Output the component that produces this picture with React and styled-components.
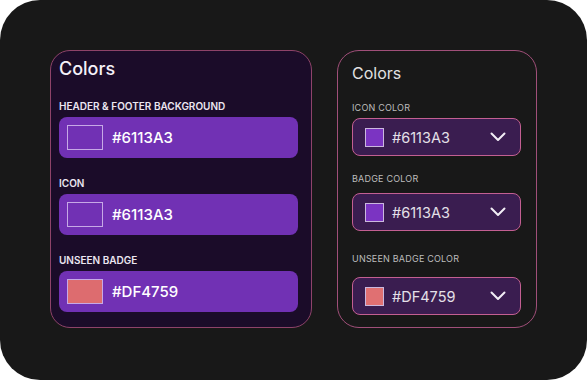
import React from "react";
import styled, { createGlobalStyle } from "styled-components";

const Global = createGlobalStyle`
  html, body { margin: 0; padding: 0; background: #ffffff; }
  * { box-sizing: border-box; }
  body { font-family: Inter, "Noto Sans", sans-serif; -webkit-font-smoothing: antialiased; }
`;

const Frame = styled.div`
  width: 587px;
  height: 380px;
  border-radius: 40px;
  background: #181818;
  display: flex;
  align-items: flex-start;
  gap: 25px;
  padding: 50px 0 0 50px;
`;

const EditorPanel = styled.section`
  width: 262px;
  border: 1px solid #8e4369;
  border-radius: 20px;
  background: #1b0c29;
  padding: 7px 13px 15px 8px;
  display: flex;
  flex-direction: column;
`;

const PreviewPanel = styled.section`
  width: 200px;
  border: 1px solid #a04f79;
  border-radius: 22px;
  background: #181818;
  padding: 12px 15px 12px 14px;
  display: flex;
  flex-direction: column;
`;

const EditorTitle = styled.h2`
  margin: 0;
  font-size: 18px;
  line-height: 22px;
  font-weight: 500;
  color: #f5f1f8;
`;

const PreviewTitle = styled.h2`
  margin: 0;
  font-size: 16px;
  line-height: 20px;
  font-weight: 400;
  color: #e2e2e2;
`;

const Field = styled.div`
  display: flex;
  flex-direction: column;
  margin-top: ${(p) => p.$top}px;
  gap: ${(p) => p.$gap}px;
`;

const EditorLabel = styled.div`
  font-size: 10px;
  line-height: 12px;
  font-weight: 600;
  color: #ebe6f0;
  white-space: nowrap;
`;

const PreviewLabel = styled.div`
  font-size: 9px;
  line-height: 11px;
  font-weight: 400;
  letter-spacing: 0.2px;
  color: #bdbdbd;
  white-space: nowrap;
`;

const ColorRow = styled.div`
  height: 41px;
  border-radius: 8px;
  background: #7131b4;
  display: flex;
  align-items: center;
  padding-left: 8px;
  gap: 9px;
`;

const RowSwatch = styled.div`
  width: 36px;
  height: 25px;
  border: 1.5px solid #c6a9e6;
  background: ${(p) => p.$color};
`;

const RowValue = styled.span`
  font-size: 15px;
  font-weight: 500;
  color: #ffffff;
`;

const Select = styled.div`
  height: 38px;
  border: 1px solid #c35f92;
  border-radius: 8px;
  background: #3a1d50;
  display: flex;
  align-items: center;
  padding: 0 14px 0 12px;
  gap: 8px;
`;

const SelectSwatch = styled.div`
  width: 19px;
  height: 19px;
  border: 1.5px solid #cbb8de;
  background: ${(p) => p.$color};
`;

const SelectValue = styled.span`
  font-size: 14.5px;
  font-weight: 400;
  color: #e4e0e8;
`;

const Chevron = styled.svg`
  margin-left: auto;
  display: block;
`;

const editorFields = [
  { label: "HEADER & FOOTER BACKGROUND", value: "#6113A3", swatch: "#7131b4", top: 20 },
  { label: "ICON", value: "#6113A3", swatch: "#7131b4", top: 19 },
  { label: "UNSEEN BADGE", value: "#DF4759", swatch: "#dd6c6f", top: 19 },
];

const previewFields = [
  { label: "ICON COLOR", value: "#6113A3", swatch: "#7b34c2", top: 19, gap: 5 },
  { label: "BADGE COLOR", value: "#6113A3", swatch: "#7b34c2", top: 17, gap: 9 },
  { label: "UNSEEN BADGE COLOR", value: "#DF4759", swatch: "#e07072", top: 22, gap: 13 },
];

export default function App() {
  return (
    <>
      <Global />
      <Frame>
        <EditorPanel>
          <EditorTitle>Colors</EditorTitle>
          {editorFields.map((f) => (
            <Field key={f.label} $top={f.top} $gap={5}>
              <EditorLabel>{f.label}</EditorLabel>
              <ColorRow>
                <RowSwatch $color={f.swatch} />
                <RowValue>{f.value}</RowValue>
              </ColorRow>
            </Field>
          ))}
        </EditorPanel>
        <PreviewPanel>
          <PreviewTitle>Colors</PreviewTitle>
          {previewFields.map((f) => (
            <Field key={f.label} $top={f.top} $gap={f.gap}>
              <PreviewLabel>{f.label}</PreviewLabel>
              <Select>
                <SelectSwatch $color={f.swatch} />
                <SelectValue>{f.value}</SelectValue>
                <Chevron width="16" height="10" viewBox="0 0 16 10" fill="none">
                  <polyline
                    points="1.5,1.5 8,8 14.5,1.5"
                    stroke="#f2eef6"
                    strokeWidth="2"
                    strokeLinecap="round"
                    strokeLinejoin="round"
                  />
                </Chevron>
              </Select>
            </Field>
          ))}
        </PreviewPanel>
      </Frame>
    </>
  );
}
